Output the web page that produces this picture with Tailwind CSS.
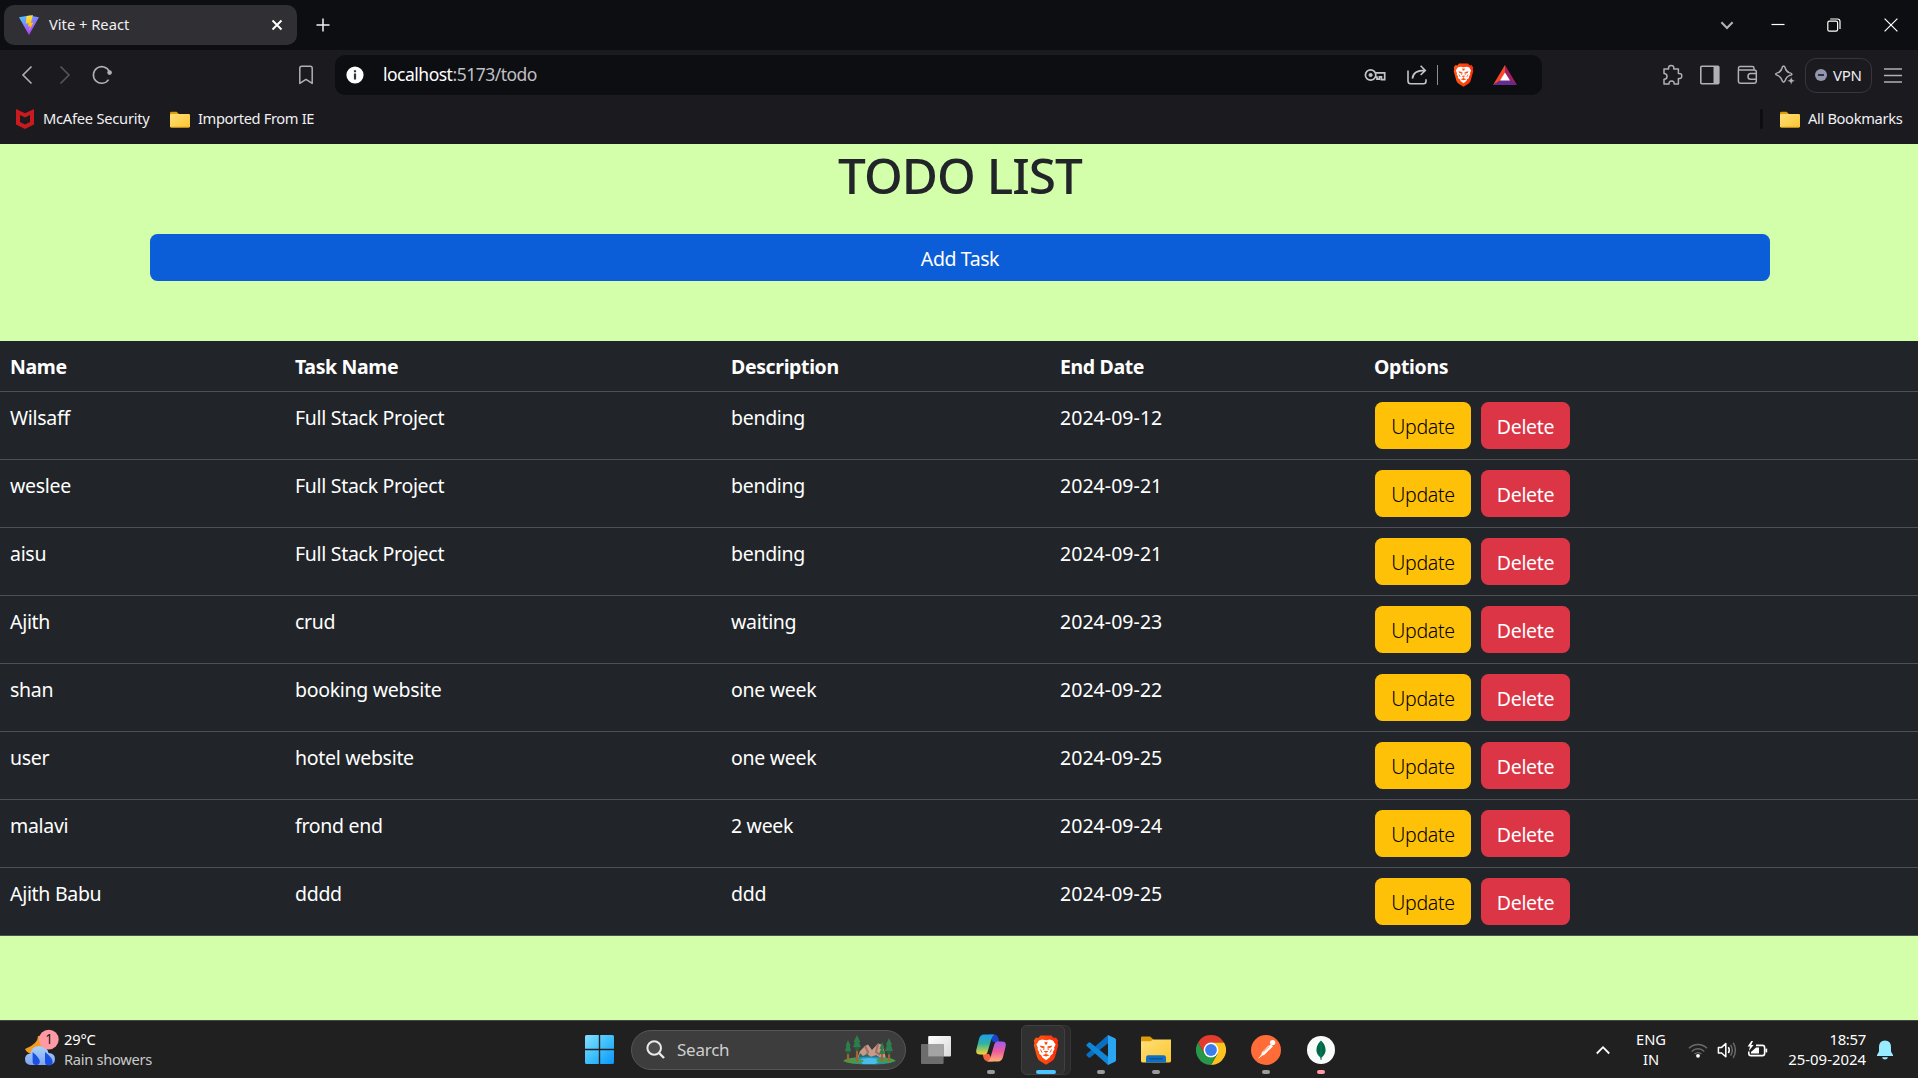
<!DOCTYPE html>
<html lang="en">
<head>
<meta charset="utf-8">
<title>Vite + React</title>
<script src="https://cdn.jsdelivr.net/npm/@tailwindcss/browser@4"></script>
</head>
<body class="w-[1918px] h-[1078px] overflow-hidden flex flex-col bg-[#d4ffaa] font-['Noto_Sans',sans-serif]">

<svg class="absolute w-0 h-0">
  <defs>
    <linearGradient id="viteA" x1="0" y1="0" x2=".6" y2="1"><stop offset="0" stop-color="#41d1ff"/><stop offset="1" stop-color="#bd34fe"/></linearGradient>
    <linearGradient id="viteB" x1=".4" y1="0" x2=".6" y2="1"><stop offset="0" stop-color="#ffea83"/><stop offset=".1" stop-color="#ffdd35"/><stop offset="1" stop-color="#ffa800"/></linearGradient>
    <linearGradient id="fold" x1="0" y1="0" x2="1" y2="1"><stop offset="0" stop-color="#ffe07a"/><stop offset="1" stop-color="#fcc52f"/></linearGradient>
    <linearGradient id="win" gradientUnits="userSpaceOnUse" x1="0" y1="0" x2="29" y2="29"><stop offset="0" stop-color="#85e0fd"/><stop offset=".5" stop-color="#3fc0fb"/><stop offset="1" stop-color="#0a95fb"/></linearGradient>
    <linearGradient id="cloud" x1="0" y1="0" x2="0" y2="1"><stop offset="0" stop-color="#a9d2f8"/><stop offset="1" stop-color="#7fa6f2"/></linearGradient>
    <linearGradient id="copA" x1="0" y1="0" x2="0" y2="1"><stop offset="0" stop-color="#1f9df0"/><stop offset=".45" stop-color="#2fb3a0"/><stop offset="1" stop-color="#f5d534"/></linearGradient>
    <linearGradient id="copB" x1="0" y1="0" x2="0" y2="1"><stop offset="0" stop-color="#a25af0"/><stop offset=".5" stop-color="#ee5c9c"/><stop offset="1" stop-color="#fdb070"/></linearGradient>
    <linearGradient id="brv" x1="0" y1="0" x2="1" y2="0"><stop offset="0" stop-color="#ff5a12"/><stop offset="1" stop-color="#ff2d0a"/></linearGradient>
    <linearGradient id="tv" x1="0" y1="0" x2="1" y2="1"><stop offset="0" stop-color="#ffffff"/><stop offset="1" stop-color="#d8d8d8"/></linearGradient>
    <symbol id="folder" viewBox="0 0 20 17"><path d="M0 2.2Q0 .8 1.4 .8H6.6L9 3H18.5Q20 3 20 4.5V8H0Z" fill="#dd9c0c"/><rect y="3" width="20" height="13.6" rx="1.4" fill="url(#fold)"/><path d="M1 16.2H19" stroke="#d99f1c" stroke-width=".8"/></symbol>
    <symbol id="brave" viewBox="0 0 26 30"><path d="M7.5 .5H18.5L20.8 3 23 2.6 25.2 5.5 24.6 8 25.2 10.2 21.8 22.4Q21 24.6 19 25.9L13 29.8 7 25.9Q5 24.6 4.2 22.4L.8 10.2 1.4 8 .8 5.5 3 2.6 5.2 3Z" fill="url(#brv)"/><path d="M13 5.2 16.8 4.6 20 5.4 22.6 9.4 21.2 12.6 21.4 14.4 19.8 17 20 18.6 17.6 20.4 16.6 22.6 13 25.2 9.4 22.6 8.4 20.4 6 18.6 6.2 17 4.6 14.4 4.8 12.6 3.4 9.4 6 5.4 9.2 4.6Z" fill="#fff"/><path d="M6.6 10.4 11 11.2 10.6 13.2 8 12.4ZM19.4 10.4 15 11.2 15.4 13.2 18 12.4ZM13 17.6 10.6 16.6 11.4 15.9H14.6L15.4 16.6ZM12.6 17H13.4V19.6H12.6ZM9.4 20.2 13 18.9 16.6 20.2 13 21.6ZM11.4 6.6 13 7.2 14.6 6.6 14 9.4H12Z" fill="#fb4a10"/><path d="M11.2 11.5 10.7 15M14.8 11.5 15.3 15M7.4 14.4 9 17.6M18.6 14.4 17 17.6" stroke="#fb4a10" stroke-width=".9"/></symbol>
  </defs>
</svg>

<!-- Tab strip -->
<header class="h-[50px] shrink-0 bg-[#0d0e12] flex items-center pl-1 pr-5">
  <div class="w-[293px] h-10 rounded-[10px] bg-[#303034] flex items-center pl-[15px] pr-[14px]">
    <svg class="w-5 h-5" viewBox="0 0 20 20"><path d="M0 2.2 10 .6 20 2.2 10 20Z" fill="url(#viteA)"/><path d="M13.9 0 7.6 1.2 6.7 8.6 9.6 8.2 8.8 11.4 11 11 10 15.8 14.6 7.6 12 8Z" fill="url(#viteB)"/></svg>
    <span class="ml-[10px] flex-1 pb-[2px] text-[14.7px] leading-5 text-[#f1f1f3] whitespace-nowrap">Vite + React</span>
    <svg class="w-3 h-3" viewBox="0 0 12 12"><path d="M1.5 1.5 10.5 10.5M10.5 1.5 1.5 10.5" stroke="#fff" stroke-width="1.9"/></svg>
  </div>
  <svg class="ml-[19px] w-[14px] h-[14px]" viewBox="0 0 14 14"><path d="M7 .5V13.5M.5 7H13.5" stroke="#f2f2f2" stroke-width="1.5"/></svg>
  <div class="flex-1"></div>
  <svg class="w-[14px] h-[14px]" viewBox="0 0 14 14"><path d="M1.4 4.2 7 10 12.6 4.2" fill="none" stroke="#b4b4b8" stroke-width="2"/></svg>
  <svg class="ml-[37px] w-[14px] h-[14px]" viewBox="0 0 14 14"><path d="M.5 6.5H13.5" stroke="#fff" stroke-width="1.2"/></svg>
  <svg class="ml-[42px] w-[14px] h-[14px]" viewBox="0 0 14 14" fill="none" stroke="#fff" stroke-width="1.2"><rect x=".8" y="3.2" width="9.8" height="10" rx="1.6"/><path d="M3.2 1H10.4Q13 1 13 3.6V11"/></svg>
  <svg class="ml-[43px] w-[14px] h-[14px]" viewBox="0 0 14 14"><path d="M.6 .6 13.4 13.4M13.4 .6 .6 13.4" stroke="#fff" stroke-width="1.2"/></svg>
</header>

<!-- Toolbar -->
<nav class="h-[50px] shrink-0 bg-[#1b1a1f] flex items-center pl-[17px]">
  <svg class="w-5 h-5" viewBox="0 0 20 20"><path d="M14.5 1.5 6 10 14.5 18.5" fill="none" stroke="#b1b0b5" stroke-width="1.6"/></svg>
  <svg class="ml-[18px] w-5 h-5" viewBox="0 0 20 20"><path d="M5.5 1.5 14 10 5.5 18.5" fill="none" stroke="#56555a" stroke-width="1.6"/></svg>
  <svg class="ml-[17px] w-5 h-5" viewBox="0 0 20 20"><path d="M16.6 14.6A8.3 8.3 0 1 1 17.3 6.6" fill="none" stroke="#b1b0b5" stroke-width="1.6"/><circle cx="17.6" cy="7.6" r="2.3" fill="#b1b0b5"/></svg>
  <svg class="ml-[184px] w-5 h-5" viewBox="0 0 20 20"><path d="M3.8 18.4V3.2Q3.8 1.3 5.7 1.3H14.3Q16.2 1.3 16.2 3.2V18.4L10 14.4Z" fill="none" stroke="#b1b0b5" stroke-width="1.5" stroke-linejoin="round"/></svg>
  <div class="ml-[19px] w-[1207px] h-10 rounded-[10px] bg-[#0d0e12] flex items-center pl-[10px] pr-[25px]">
    <svg class="w-5 h-5" viewBox="0 0 20 20"><circle cx="10" cy="10" r="8.6" fill="#fff"/><path d="M10 8.6V14.4M10 5.2V7.3" stroke="#33343a" stroke-width="2.2"/></svg>
    <span class="ml-[18px] flex-1 pb-[2px] text-[17.5px] leading-6 tracking-[-0.5px] whitespace-nowrap text-[#c0c0c4]"><span class="text-white">localhost</span>:5173/todo</span>
    <svg class="w-[22px] h-[22px]" viewBox="0 0 22 22" fill="none" stroke="#c4c4c8" stroke-width="1.7"><circle cx="6.6" cy="11" r="5.2"/><circle cx="6.6" cy="11" r="1.6" fill="#c4c4c8" stroke-width="1"/><path d="M11.4 8.9H20.7V15.6H17.4V12.8H15.4V15.2H13V13H11.4"/></svg>
    <svg class="ml-5 w-[22px] h-[22px]" viewBox="0 0 22 22" fill="none" stroke="#c4c4c8" stroke-width="1.6"><path d="M2 6.5V17Q2 19.7 4.7 19.7H17.6Q20 19.7 20 17.3V15.2"/><path d="M6.4 14.6Q7 6.4 19 6.4M14.6 1.8 19.3 6.4 14.6 11"/></svg>
    <div class="ml-[9px] w-px h-5 bg-[#8d8d92]"></div>
    <svg class="ml-[15px] w-[21px] h-6"><use href="#brave"/></svg>
    <svg class="ml-[19px] w-6 h-5" viewBox="0 0 24 20"><path d="M12 0 0 20 12 13Z" fill="#ff4724"/><path d="M12 0 24 20 12 13Z" fill="#9e1f63"/><path d="M0 20H24L12 12Z" fill="#662d91"/><path d="M12 7.6 17 15.6H7Z" fill="#fff"/></svg>
  </div>
  <svg class="ml-[119px] w-[22px] h-[22px]" viewBox="0 0 22 22"><path d="M3 5H7.6Q7.2 1.4 10.2 1.4T12.8 5H17.4V9.4Q20.8 9.2 20.8 12T17.4 14.6V20H13.2Q13.4 17 10.6 17T8 20H3V15.2Q6 15.2 6 12.4T3 9.6Z" fill="none" stroke="#b1b0b5" stroke-width="1.5" stroke-linejoin="round"/></svg>
  <svg class="ml-4 w-[22px] h-[22px]" viewBox="0 0 22 22"><rect x="1.8" y="2.3" width="18" height="17.4" rx="1" fill="none" stroke="#b1b0b5" stroke-width="1.6"/><rect x="14.5" y="2.3" width="5.4" height="17.4" fill="#b1b0b5"/></svg>
  <svg class="ml-[15px] w-[22px] h-[22px]" viewBox="0 0 22 22" fill="none" stroke="#b1b0b5" stroke-width="1.5"><path d="M2.4 5.5V17Q2.4 19.3 4.7 19.3H18Q20.3 19.3 20.3 17V8Q20.3 6 18.3 6H4Q2.4 6 2.4 4.4T4 2.6H16.4Q18 2.6 18 4.2V6"/><path d="M20.3 9.6H14.6Q12 9.6 12 12.4T14.6 15.2H20.3"/></svg>
  <svg class="ml-4 w-[22px] h-[22px]" viewBox="0 0 22 22"><path d="M9.6 2 Q10.8 2 11.3 4.2 Q12.2 7.6 15.2 8.6 Q18 9.4 18 10.2 T15.2 11.6 Q12.2 12.8 11.3 16 Q10.6 18.2 9.6 18.2 T7.9 16 Q7 12.8 4 11.6 Q1.6 10.9 1.6 10.1 T4 8.6 Q7 7.6 7.9 4.2 Q8.4 2 9.6 2Z" fill="none" stroke="#b1b0b5" stroke-width="1.5"/><path d="M17.2 12.4 18.4 15.6 21.4 16.8 18.4 18 17.2 21 16 18 12.8 16.8 16 15.6Z" fill="#b1b0b5" stroke="#1b1a1f" stroke-width=".6"/></svg>
  <div class="ml-[9px] w-[67px] h-[35px] rounded-[11px] border border-[#37363c] flex items-center pl-[9px] whitespace-nowrap">
    <svg class="w-3 h-3" viewBox="0 0 12 12"><circle cx="6" cy="6" r="6" fill="#9297b0"/><path d="M3 6H9" stroke="#1b1a1f" stroke-width="1.6"/></svg>
    <span class="ml-[6px] text-[15px] leading-5 tracking-[-0.3px] text-[#eeeef2]">VPN</span>
  </div>
  <svg class="ml-[11px] w-5 h-5" viewBox="0 0 20 20"><path d="M1 4H19M1 10.5H19M1 17H19" stroke="#b1b0b5" stroke-width="1.5"/></svg>
</nav>

<!-- Bookmarks bar -->
<div class="h-11 shrink-0 bg-[#1b1a1f] flex items-center pl-4 pr-4 pb-[6px] text-[14.7px] leading-5 text-[#f0f0f3] whitespace-nowrap">
  <svg class="w-[18px] h-5" viewBox="0 0 18 20"><path d="M0 0 9 4.2 18 0V15.6L9 20 0 15.6ZM4 6V13L9 15.5 14 13V6L9 8.4Z" fill="#c81a1f" fill-rule="evenodd"/></svg>
  <span class="ml-[9px] w-[108px] pb-[2px] tracking-[-0.25px]">McAfee Security</span>
  <svg class="ml-[19px] w-5 h-[17px]"><use href="#folder"/></svg>
  <span class="ml-2 pb-[2px] tracking-[-0.38px]">Imported From IE</span>
  <div class="flex-1"></div>
  <div class="w-[3px] h-5 rounded bg-[#0d0e12]"></div>
  <svg class="ml-[17px] w-5 h-[17px]"><use href="#folder"/></svg>
  <span class="ml-2 w-[94px] pb-[2px] tracking-[-0.35px]">All Bookmarks</span>
</div>

<!-- Page -->
<main class="flex-1 min-h-0 flex flex-col">
  <h1 class="h-[60px] pt-px pl-[2px] text-center text-[49.5px] leading-[60px] font-medium tracking-[-0.95px] text-[#212529]">TODO LIST</h1>
  <button class="mt-[30px] ml-[150px] mr-[148px] h-[47px] rounded-[7.5px] bg-[#0b5ed7] text-white text-[19.5px] tracking-[-0.4px] leading-[30px] pt-[2px]">Add Task</button>
  <div class="mt-[60px] bg-[#212529] text-white text-[19.5px] leading-[30px]">
    <div class="grid grid-cols-[285px_436px_329px_315px_1fr] h-[51px] pt-[11px] border-b border-[#4d5154] font-bold tracking-[-0.37px]">
      <div class="pl-[10px]">Name</div><div class="pl-[10px]">Task Name</div><div class="pl-[10px]">Description</div><div class="pl-[10px]">End Date</div><div class="pl-[9px]">Options</div>
    </div>
    <div id="rows"></div>
  </div>
</main>

<!-- Taskbar -->
<footer class="h-[58px] shrink-0 bg-[#202020] border-t border-[#454545] flex items-center text-white whitespace-nowrap">
  <svg class="ml-[24px] w-9 h-10 -mt-[3px]" viewBox="0 0 36 40"><path d="M14 8Q14 16 1 21 3 26 10 26L18 20V8Z" fill="#f59b1c"/><path d="M8 37Q1 37 1 31 1 26 6.4 25.4 8 18 15.5 18 23 18 24.6 25 31 25.6 31 31 31 37 24 37Z" fill="url(#cloud)"/><path d="M8.6 24Q15.8 30 15.8 33.6 15.8 37 12.2 37 8.6 37 8.6 33.6ZM21 24Q28.6 30 28.6 34 28.6 37.6 24.8 37.6 21 37.6 21 34Z" fill="#1c50e2"/><circle cx="24.8" cy="11.6" r="9.9" fill="#ff99a4"/><text x="25" y="16.4" text-anchor="middle" font-family="Noto Sans" font-size="13.5" fill="#201a1b">1</text></svg>
  <div class="ml-1 w-[92px] pb-[2px] text-[14.7px] leading-5">
    <div class="tracking-[-0.2px]">29°C</div><div class="tracking-[-0.3px] text-[#c9c9c9]">Rain showers</div>
  </div>
  <svg class="ml-[429px] w-[29px] h-[29px]" viewBox="0 0 29 29" fill="url(#win)"><path d="M1.5 0H13.8V13.8H0V1.5Q0 0 1.5 0ZM15.2 0H27.5Q29 0 29 1.5V13.8H15.2ZM0 15.2H13.8V29H1.5Q0 29 0 27.5ZM15.2 15.2H29V27.5Q29 29 27.5 29H15.2Z"/></svg>
  <div class="ml-[17px] w-[275px] h-10 rounded-full bg-[#3d3d3d] border border-[#565656] flex items-center pl-[14px]">
    <svg class="w-[19px] h-[19px]" viewBox="0 0 19 19"><circle cx="8.2" cy="8" r="6.8" fill="#4d4d4d" stroke="#eaeaea" stroke-width="2"/><path d="M13 13 18 18" stroke="#eaeaea" stroke-width="2.4"/></svg>
    <span class="ml-[12px] flex-1 text-[17px] leading-6 tracking-[-0.25px] text-[#cfcfcf]">Search</span>
    <svg class="mr-[9px] w-[53px] h-[30px]" viewBox="0 0 53 30">
      <path d="M14 24 17 16 22 11 25 9.5 29 15 35 8.6 40 10 43 24Z" fill="#c99a88"/><path d="M22 11 25 17 23 21M35 9 33 17 37 20" stroke="#9c6f68" stroke-width="2" fill="none"/>
      <path d="M15 24 17 18 20 21 24 19 28 22 33 20 38 23V26H15Z" fill="#2f6a60"/>
      <ellipse cx="27" cy="25.6" rx="24" ry="4" fill="#2a8fb8"/><path d="M14 25Q26 21 40 25L32 29H20Z" fill="#47bde8"/>
      <path d="M0 26Q6 21 18 24.6 24 26 17 28 6 29.6 0 26ZM53 26Q48 21.6 37 23.6 30 25 36 27.6 46 29 53 26Z" fill="#4a9a45"/>
      <path d="M5 14V26M14 10V27M39 14V26M46 12V26" stroke="#a8632c" stroke-width="2.2"/>
      <path d="M5 5 7.6 10.6 6.8 11 8 16 2 16 3.4 11 2.6 10.6ZM14 0 17.4 7 16 7.4 18 12 10 12 12 7.4 10.6 7ZM39 7 41.6 14 36.6 14ZM39 12 42 19 36 19ZM46 3 49 9.6 48 10 50 16 42 16 44 10 43 9.6Z" fill="#2f7d4d"/>
      <path d="M2.4 16H7.6L5 20ZM10.6 12H17.4L14 16.4ZM43 16H49L46 20Z" fill="#1f6440"/>
    </svg>
  </div>
  <svg class="ml-[15px] w-[30px] h-7" viewBox="0 0 30 28"><rect x="7.2" y="0" width="22.8" height="20.4" rx="1" fill="url(#tv)"/><rect x="0" y="8" width="22.6" height="20" rx="1" fill="#6d6d6d"/><path d="M7.2 8H22.6V20.4H7.2Z" fill="#a3a3a3"/></svg>

  <div class="relative ml-[18px] w-11 h-[50px] flex items-center justify-center">
    <svg class="w-[30px] h-[28px] -mt-1" viewBox="0 0 30 28"><path d="M13 .5H19Q21.4 .8 22.4 4L23.4 8H17Z" fill="#1b45c8"/><path d="M17 27.5H11Q8.6 27.2 7.6 24L6.4 19.6 13 20Z" fill="#f4643f"/><path d="M8 .5H18.5Q16.4 1.6 15.4 5L11.4 18.4Q10.6 20.5 8.4 20.5H4Q-.8 20.5 .4 15.5L3 5Q4.2 .7 8 .5Z" fill="url(#copA)"/><path d="M22 27.5H11.5Q13.6 26.4 14.6 23L18.6 9.6Q19.4 7.5 21.6 7.5H26Q30.8 7.5 29.6 12.5L27 23Q25.8 27.3 22 27.5Z" fill="url(#copB)"/></svg>
    <div class="absolute bottom-px left-[18px] w-2 h-1 rounded-full bg-[#9a9a9a]"></div>
  </div>
  <div class="relative ml-2 w-[50px] h-[50px] rounded-md bg-[#2a2a2a] border border-[#363636]">
    <div class="absolute inset-y-[-1px] left-[-1px] w-[44px] rounded-md bg-[#2f302f] border border-[#404040] flex items-center justify-center pl-[5px]"><svg class="w-[26px] h-[30px]"><use href="#brave"/></svg></div>
    <div class="absolute bottom-0 left-[14px] w-5 h-1 rounded-full bg-[#4cc2ff]"></div>
  </div>
  <div class="relative ml-[8px] w-11 h-[50px] flex items-center justify-center">
    <svg class="w-[30px] h-[30px]" viewBox="0 0 30 30"><path d="M22 0 29 3.2Q30 3.8 30 5V25Q30 26.2 29 26.8L22 30Z" fill="#2aa5f2"/><path d="M22 0V8.2L4.2 22.4Q3.4 23 2.7 22.4L.6 20.4Q0 19.6 .7 19Z" fill="#0a6fc0"/><path d="M22 30V21.8L4.2 7.6Q3.4 7 2.7 7.6L.6 9.6Q0 10.4 .7 11Z" fill="#1286d6"/></svg>
    <div class="absolute bottom-px left-[18px] w-2 h-1 rounded-full bg-[#9a9a9a]"></div>
  </div>
  <div class="relative ml-[11px] w-11 h-[50px] flex items-center justify-center">
    <svg class="w-[30px] h-[27px]" viewBox="0 0 30 27"><path d="M0 1.6Q0 .4 1.2 .4H9L12.6 3.6V7H0Z" fill="#dd9c0c"/><path d="M0 5.2H9.6L12.6 3.6H30V25Q30 26.4 28.6 26.4H1.4Q0 26.4 0 25Z" fill="url(#fold)"/><path d="M5 26.4V21.6Q5 19.2 7.4 19.2H22.6Q25 19.2 25 21.6V26.4Z" fill="#0f6fc2"/><path d="M8.4 22.8H21.6" stroke="#0a4d92" stroke-width="1.2"/></svg>
    <div class="absolute bottom-px left-[18px] w-2 h-1 rounded-full bg-[#9a9a9a]"></div>
  </div>
  <div class="ml-[11px] w-11 h-[50px] flex items-center justify-center">
    <svg class="w-[30px] h-[30px]" viewBox="0 0 30 30"><path d="M2 7.5A15 15 0 0 1 28 7.5H15L8.5 18.75Z" fill="#e33b2e"/><path d="M28 7.5A15 15 0 0 1 15 30L21.5 18.75 15 7.5Z" fill="#fcc31e"/><path d="M15 30A15 15 0 0 1 2 7.5L8.5 18.75 15 22.5 21.5 18.75Z" fill="#279847"/><circle cx="15" cy="15" r="7.4" fill="#fff"/><circle cx="15" cy="15" r="5.9" fill="#3b7ded"/></svg>
  </div>
  <div class="relative ml-[11px] w-11 h-[50px] flex items-center justify-center">
    <svg class="w-[30px] h-[30px]" viewBox="0 0 30 30"><circle cx="15" cy="15" r="15" fill="#ff6c37"/><circle cx="21.6" cy="7.6" r="2.7" fill="#fff"/><path d="M20 9.6 22 11.4 13.2 20 11.4 20.4 6.6 24.2 10.4 19.4 10.8 17.6 17 11Z" fill="#fff"/><path d="M12.6 16.6 18.4 11.4M19 14.4 16.4 17.6" stroke="#ff6c37" stroke-width=".8"/></svg>
    <div class="absolute bottom-px left-[18px] w-2 h-1 rounded-full bg-[#9a9a9a]"></div>
  </div>
  <div class="relative ml-[11px] w-11 h-[50px] flex items-center justify-center">
    <svg class="w-[28px] h-[28px]" viewBox="0 0 28 28"><circle cx="14" cy="14" r="14" fill="#f9fbfa"/><path d="M14 4.6Q18.6 9 18.6 14 18.6 18.4 14.6 21.4L14.4 24H13.6L13.4 21.4Q9.4 18.4 9.4 14 9.4 9 14 4.6Z" fill="#00684a"/><path d="M14 6V22" stroke="#0a8a5c" stroke-width=".7"/></svg>
    <div class="absolute bottom-px left-[18px] w-2 h-1 rounded-full bg-[#ff99a4]"></div>
  </div>
  <div class="flex-1"></div>
  <svg class="w-[14px] h-[14px]" viewBox="0 0 14 14"><path d="M.8 10.5 7 4.2 13.2 10.5" fill="none" stroke="#fff" stroke-width="1.8"/></svg>
  <div class="ml-[21px] w-10 pb-px text-center text-[14.7px] leading-5"><div>ENG</div><div>IN</div></div>
  <svg class="ml-[17px] w-5 h-5" viewBox="0 0 20 20" fill="none" stroke="#6a6a6a" stroke-width="1.5"><path d="M1 8.2A12.6 12.6 0 0 1 19 8.2M3.8 11.4A8.6 8.6 0 0 1 16.2 11.4M6.6 14A5 5 0 0 1 13.4 14"/><circle cx="10" cy="15.8" r="1.9" fill="#fff" stroke="none"/></svg>
  <svg class="ml-[9px] w-5 h-5" viewBox="0 0 20 20" fill="none" stroke="#fff" stroke-width="1.5"><path d="M1.4 7.4H4.6L8.8 3.6V16.8L4.6 13H1.4Z" stroke-linejoin="round"/><path d="M11.4 7.2Q13.2 10.2 11.4 13.2"/><path d="M13.6 4.8Q17 10.2 13.6 15.6M16.2 2.6Q20.6 10.2 16.2 17.8" stroke="#6a6a6a"/></svg>
  <svg class="ml-[10px] w-[21px] h-5" viewBox="0 0 21 20"><path d="M9 5.4H15.4Q17.6 5.4 17.6 7.6V13.4Q17.6 15.6 15.4 15.6H4Q1.8 15.6 1.8 13.4V11.6" fill="none" stroke="#fff" stroke-width="1.6"/><path d="M4 13.6V12L9 7.4H12V13.6Z" fill="#fff"/><path d="M18.4 8.6H20.2V12.4H18.4Z" fill="#fff"/><path d="M4.4 1 .6 6.6H3L1.8 11 6.6 5H4.2L6 1Z" fill="#fff"/></svg>
  <div class="ml-[18px] w-20 pb-[2px] text-right text-[14.9px] leading-5"><div class="tracking-[-0.3px]">18:57</div><div>25-09-2024</div></div>
  <svg class="ml-[11px] mr-[25px] w-4 h-5" viewBox="0 0 16 20"><path d="M8 .6Q14 .8 14 7V11.4L16 15V16H0V15L2 11.4V7Q2 .8 8 .6ZM5 17.2H11Q10.4 19.4 8 19.4T5 17.2Z" fill="#99ebff"/></svg>
</footer>

<script>
const tasks = [
  ["Wilsaff", "Full Stack Project", "bending", "2024-09-12"],
  ["weslee", "Full Stack Project", "bending", "2024-09-21"],
  ["aisu", "Full Stack Project", "bending", "2024-09-21"],
  ["Ajith", "crud", "waiting", "2024-09-23"],
  ["shan", "booking website", "one week", "2024-09-22"],
  ["user", "hotel website", "one week", "2024-09-25"],
  ["malavi", "frond end", "2 week", "2024-09-24"],
  ["Ajith Babu", "dddd", "ddd", "2024-09-25"]
];
document.getElementById("rows").innerHTML = tasks.map(t => `
  <div class="grid grid-cols-[285px_436px_329px_315px_1fr] h-[68px] pt-[10px] border-b border-[#4d5154] tracking-[-0.3px]">
    <div class="pl-[10px] pt-px">${t[0]}</div><div class="pl-[10px] pt-px">${t[1]}</div><div class="pl-[10px] pt-px">${t[2]}</div>
    <div class="pl-[10px] pt-px tracking-[0.05px]">${t[3]}</div>
    <div class="pl-[10px] flex gap-[10px] tracking-[-0.3px]">
      <button class="w-24 h-[47px] pt-[2px] rounded-[7.5px] bg-[#ffc107] text-black font-[350]">Update</button>
      <button class="w-[89px] h-[47px] pt-[2px] rounded-[7.5px] bg-[#dc3545] text-white">Delete</button>
    </div>
  </div>`).join("");
</script>
</body>
</html>
